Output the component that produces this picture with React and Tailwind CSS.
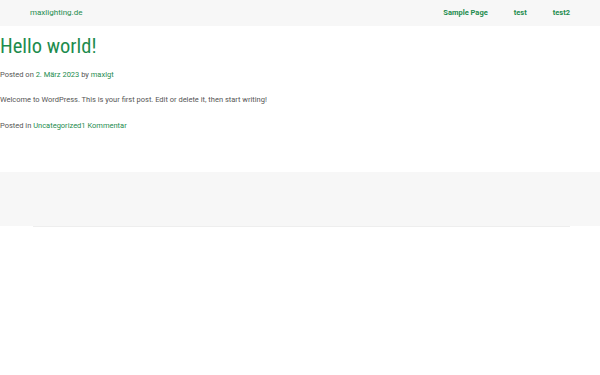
import React from 'react';

const green = 'text-[#1d8c4e]';

const App = () => {
  return (
    <div className="min-h-[375px] bg-white font-['Roboto',sans-serif]">
      <header className="h-[26px] bg-[#f7f7f7] flex items-center justify-between pl-[30px] pr-[30px]">
        <a className={`text-[8px] ${green}`}>maxlighting.de</a>
        <nav className={`flex gap-[26px] text-[7.5px] font-bold ${green}`}>
          <a>Sample Page</a>
          <a>test</a>
          <a>test2</a>
        </nav>
      </header>
      <main className="pt-[5px] h-[146px]">
        <h1 className={`text-[20.5px] leading-[30px] font-['Roboto_Condensed','Liberation_Sans_Narrow','Roboto',sans-serif] ${green}`}>Hello world!</h1>
        <p className="mt-[8px] text-[7.5px] text-[#555]">
          Posted on <a className={green}>2. März 2023</a> by <a className={green}>maxlgt</a>
        </p>
        <p className="mt-[14px] text-[7.5px] text-[#555]">
          Welcome to WordPress. This is your first post. Edit or delete it, then start writing!
        </p>
        <p className="mt-[14px] text-[7.5px] text-[#555]">
          Posted in <a className={green}>Uncategorized</a><a className={green}>1 Kommentar</a>
        </p>
      </main>
      <footer className="h-[54px] bg-[#f7f7f7]" />
      <div className="mx-[33px] h-px bg-[#eeeeee] w-[537px]" />
    </div>
  );
};

export default App;
